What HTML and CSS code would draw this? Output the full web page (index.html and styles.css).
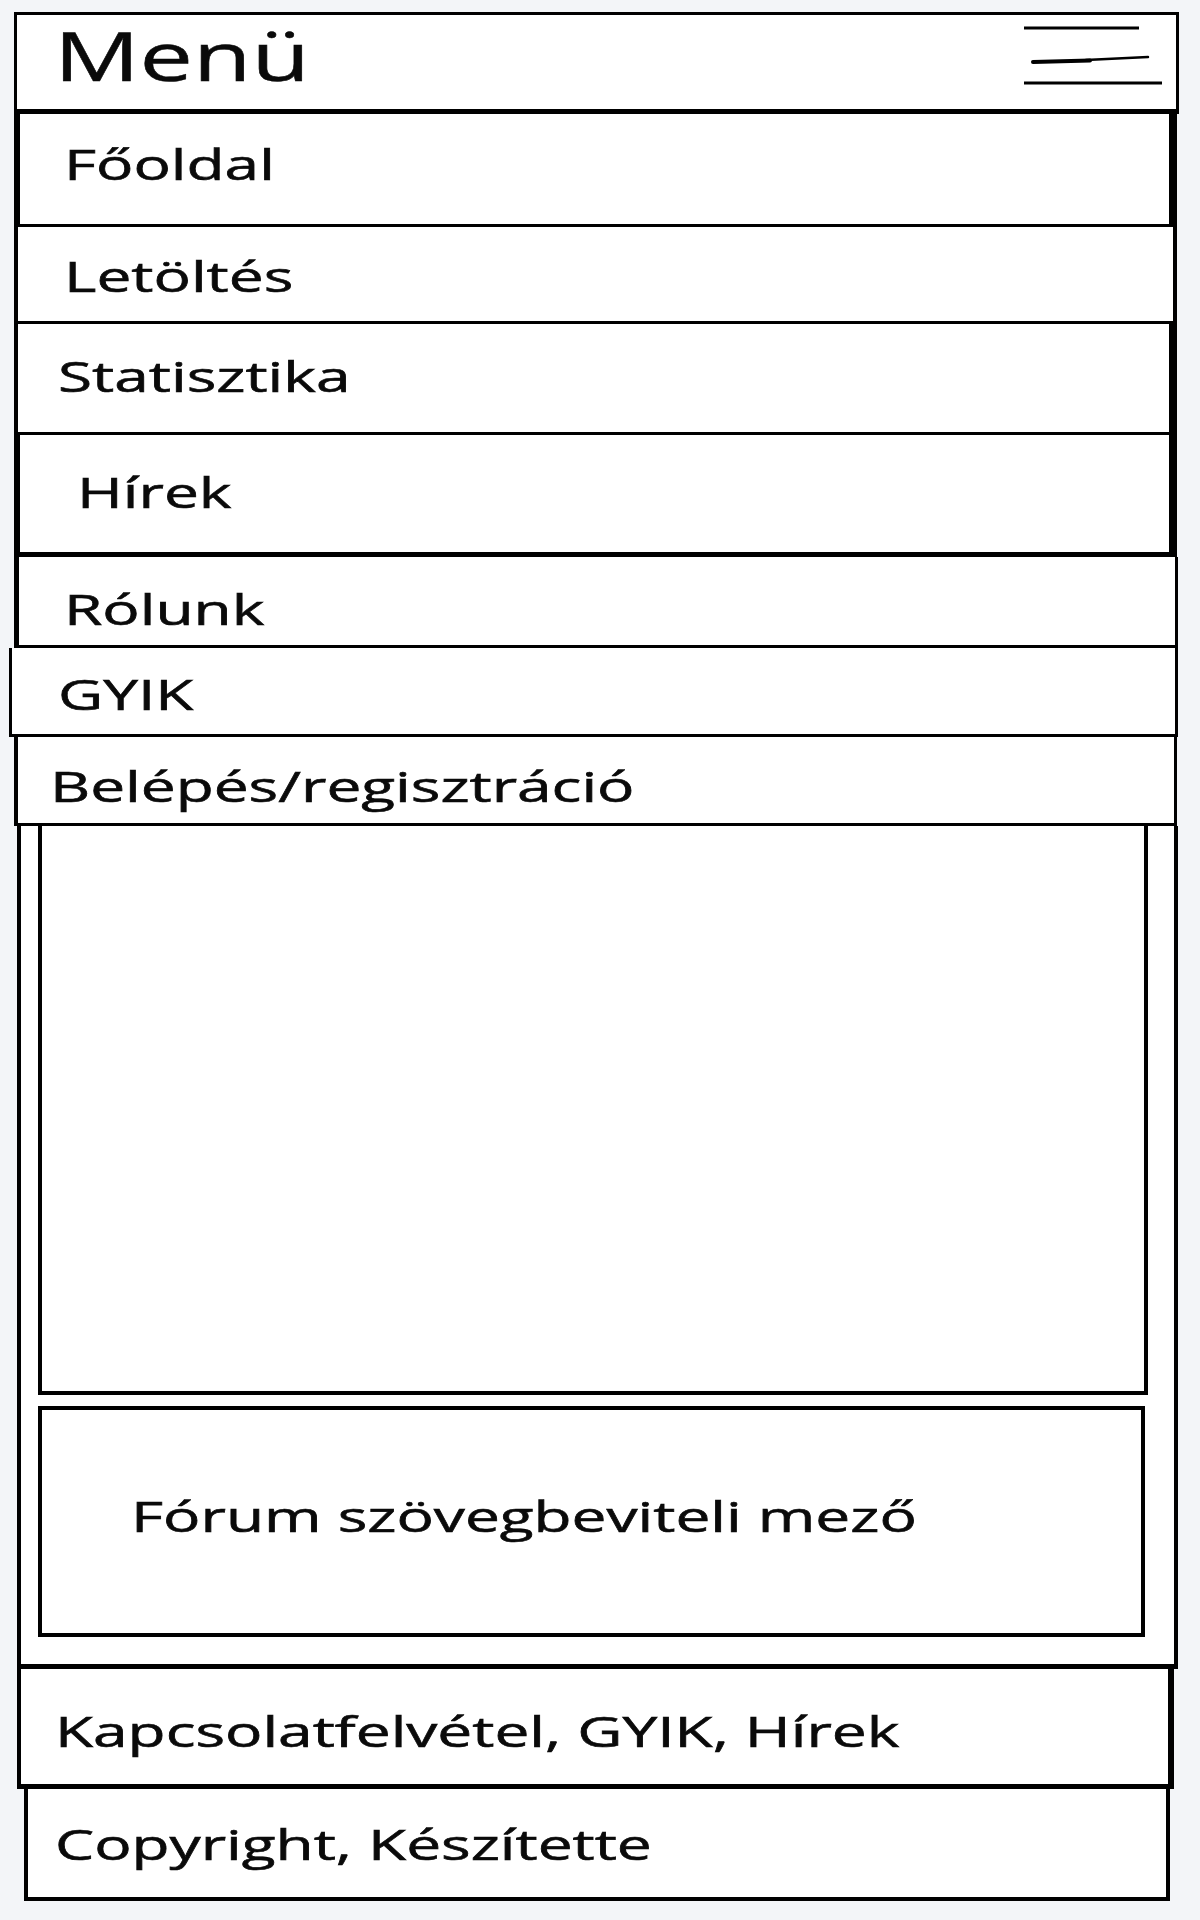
FILE: index.html
```html
<!DOCTYPE html>
<html lang="hu">
<head>
<meta charset="utf-8">
<title>Menü</title>
<link rel="stylesheet" href="styles.css">
</head>
<body>
<div class="phone">
  <header class="item head">
    <span class="label big">Menü</span>
    <svg class="burger" width="146" height="72" viewBox="0 0 146 72" aria-hidden="true">
      <line x1="4" y1="8" x2="119" y2="8" stroke="#000" stroke-width="3"/>
      <line x1="13" y1="42" x2="70" y2="40.5" stroke="#000" stroke-width="4" stroke-linecap="round"/>
      <line x1="66" y1="40" x2="128" y2="37" stroke="#000" stroke-width="2.5" stroke-linecap="round"/>
      <line x1="4" y1="63" x2="142" y2="63" stroke="#000" stroke-width="3"/>
    </svg>
  </header>
  <nav class="menu">
    <a href="#" class="item fooldal"><span class="label">Főoldal</span></a>
    <a href="#" class="item letoltes"><span class="label">Letöltés</span></a>
    <a href="#" class="item stat"><span class="label">Statisztika</span></a>
    <a href="#" class="item hirek"><span class="label">Hírek</span></a>
    <a href="#" class="item rolunk"><span class="label">Rólunk</span></a>
    <a href="#" class="item gyik"><span class="label">GYIK</span></a>
    <a href="#" class="item belepes"><span class="label">Belépés/regisztráció</span></a>
  </nav>
  <main class="frame">
    <div class="content"></div>
    <div class="forum"><span class="label forum-label">Fórum szövegbeviteli mező</span></div>
  </main>
  <footer>
    <div class="item links"><span class="label">Kapcsolatfelvétel, GYIK, Hírek</span></div>
    <div class="item copy"><span class="label">Copyright, Készítette</span></div>
  </footer>
</div>
</body>
</html>
```
FILE: styles.css
```css
* {
  box-sizing: border-box;
  margin: 0;
  padding: 0;
}

html, body {
  background: #f3f5f8;
}

body {
  font-family: "Open Sans", "Noto Sans", sans-serif;
  color: #000;
  width: 1200px;
  min-height: 1920px;
}

.phone {
  padding-top: 12px;
  width: 1200px;
}

.menu {
  display: flex;
  flex-direction: column;
}

.item {
  display: block;
  background: #fff;
  border: 3px solid #000;
  border-top: 0;
  color: #000;
  text-decoration: none;
}

.label {
  display: inline-block;
  font-size: 42px;
  line-height: 42px;
  font-weight: 400;
  color: #0a0a0a;
  -webkit-text-stroke: 0.6px #0a0a0a;
  white-space: nowrap;
  transform: scaleX(1.48);
  transform-origin: 0 50%;
}

.big {
  font-size: 68px;
  line-height: 68px;
  -webkit-text-stroke: 0.5px #0a0a0a;
  transform: scaleX(1.40);
}

/* header */
.head {
  display: flex;
  align-items: flex-start;
  margin-left: 14px;
  width: 1165px;
  height: 102px;
  border-top: 3px solid #000;
  border-bottom: 5px solid #000;
  padding: 6px 0 0 37px;
}

.burger {
  margin-left: auto;
  margin-right: 10px;
  margin-top: -1px;
  flex: none;
}

/* menu items */
.fooldal {
  margin-left: 14px;
  width: 1163px;
  height: 113px;
  border-left-width: 6px;
  border-right-width: 8px;
  padding: 29px 0 0 44px;
}

.letoltes {
  margin-left: 14px;
  width: 1163px;
  height: 97px;
  border-left-width: 4px;
  border-right-width: 4px;
  padding: 28px 0 0 46px;
}

.stat {
  margin-left: 14px;
  width: 1163px;
  height: 111px;
  border-left-width: 4px;
  border-right-width: 8px;
  padding: 31px 0 0 40px;
}

.hirek {
  margin-left: 14px;
  width: 1163px;
  height: 122px;
  border-left-width: 6px;
  border-right-width: 8px;
  border-bottom-width: 5px;
  padding: 36px 0 0 57px;
}

.rolunk {
  margin-left: 14px;
  width: 1164px;
  height: 91px;
  border-left-width: 5px;
  padding: 31px 0 0 45px;
}

.gyik {
  margin-left: 9px;
  width: 1169px;
  height: 89px;
  padding: 25px 0 0 46px;
}

.belepes {
  margin-left: 14px;
  width: 1163px;
  height: 89px;
  border-left-width: 4px;
  padding: 28px 0 0 32px;
}

/* main frame */
.frame {
  display: flex;
  flex-direction: column;
  margin-left: 17px;
  width: 1161px;
  height: 843px;
  background: #fff;
  border: 4px solid #000;
  border-top: 0;
  border-bottom-width: 5px;
  padding-left: 17px;
}

.content {
  width: 1110px;
  height: 569px;
  border: 4px solid #000;
  border-top: 0;
}

.forum {
  margin-top: 11px;
  width: 1107px;
  height: 231px;
  border: 4px solid #000;
  padding: 85px 0 0 89px;
}

/* footer */
.links {
  margin-left: 17px;
  width: 1157px;
  height: 120px;
  border-left-width: 4px;
  border-right-width: 6px;
  border-bottom-width: 5px;
  padding: 41px 0 0 34px;
}

.copy {
  margin-left: 24px;
  width: 1146px;
  height: 112px;
  border-width: 0 4px 4px 4px;
  padding: 34px 0 0 27px;
}
```
